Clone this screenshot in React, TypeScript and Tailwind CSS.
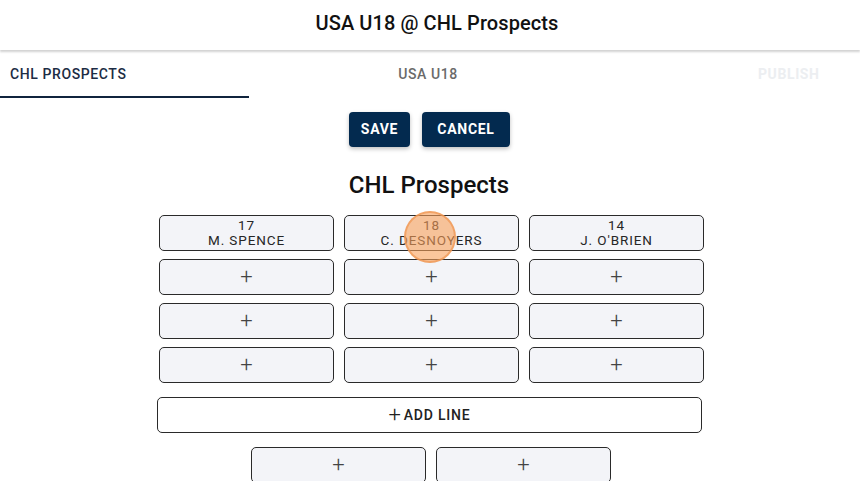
import React from "react";

const font = { fontFamily: "Roboto, 'Liberation Sans', sans-serif" };

function Cell({ num, name }: { num?: string; name?: string }) {
  return (
    <div className="h-[36px] rounded-[5px] border border-[#2a2a2a] bg-[#f3f4f8] flex flex-col items-center justify-center text-[#262626] leading-[15px]">
      {name ? (
        <>
          <span className="text-[13.5px] tracking-[0.9px]">{num}</span>
          <span className="text-[13.5px] tracking-[0.9px]">{name}</span>
        </>
      ) : (
        <span className="text-[22px] font-light leading-none text-[#444]">+</span>
      )}
    </div>
  );
}

export default function App() {
  return (
    <div className="w-[860px] h-[481px] overflow-hidden bg-white relative" style={font}>
      <div className="h-[50px] flex items-center justify-center pl-[14px] shadow-[0_2px_2px_rgba(0,0,0,0.18)] relative z-10">
        <span className="text-[20px] font-medium text-[#111] tracking-[0.1px] -mt-[4px]">USA U18 @ CHL Prospects</span>
      </div>
      <div className="flex h-[48px] text-[14px] font-medium tracking-[0.6px]">
        <div className="w-[249px] border-b-2 border-[#10243d] flex items-center pl-[10px] text-[#1c2c44] pt-[2px]">
          CHL PROSPECTS
        </div>
        <div className="w-[362px] flex items-center justify-center text-[#6a6a6a] -ml-[2px]">
          USA U18
        </div>
        <div className="flex-1 flex items-center pl-[149px] text-[#eceef1] font-bold">
          PUBLISH
        </div>
      </div>
      <div className="flex justify-center gap-[12px] mt-[14px] pr-[1px]">
        <button className="h-[35px] w-[61px] rounded-[4px] bg-[#032a4f] text-white text-[14px] font-bold tracking-[0.7px] shadow-[0_2px_4px_rgba(0,0,0,0.25)]">
          SAVE
        </button>
        <button className="h-[35px] w-[88px] rounded-[4px] bg-[#032a4f] text-white text-[14px] font-bold tracking-[0.7px] shadow-[0_2px_4px_rgba(0,0,0,0.25)]">
          CANCEL
        </button>
      </div>
      <div className="text-center text-[24px] font-medium text-[#111] mt-[24px] leading-[28px] pr-[2px]">
        CHL Prospects
      </div>
      <div className="w-[545px] ml-[159px] mt-[16px] grid grid-cols-3 gap-x-[10px] gap-y-[8px]">
        <Cell num="17" name="M. SPENCE" />
        <Cell num="18" name="C. DESNOYERS" />
        <Cell num="14" name="J. O'BRIEN" />
        {Array.from({ length: 9 }).map((_, i) => (
          <Cell key={i} />
        ))}
      </div>
      <div className="w-[545px] ml-[157px] mt-[14px] h-[36px] rounded-[5px] border border-[#2a2a2a] bg-white flex items-center justify-center text-[#222] text-[14px] font-medium tracking-[0.8px]">
        <span className="text-[22px] font-light leading-none mr-[2px] -mt-[1px]">+</span>
        ADD LINE
      </div>
      <div className="flex justify-center gap-[10px] mt-[14px] pl-[2px]">
        <div className="w-[175px]"><Cell /></div>
        <div className="w-[175px]"><Cell /></div>
      </div>
      <div className="absolute left-[404px] top-[211px] w-[52px] h-[52px] rounded-full bg-[rgba(248,160,90,0.6)] border-2 border-[rgba(240,150,80,0.7)]" />
    </div>
  );
}
